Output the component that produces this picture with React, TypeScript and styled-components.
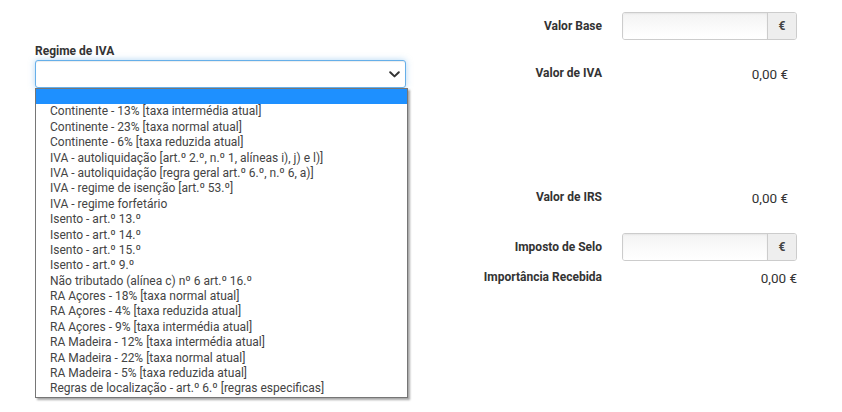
import { createGlobalStyle } from "styled-components";
import styled from "styled-components";

const GlobalStyle = createGlobalStyle`
  html, body {
    margin: 0;
    padding: 0;
    background: #ffffff;
    font-family: Roboto, "Liberation Sans", Arial, sans-serif;
    color: #333333;
  }
`;

const Page = styled.main`
  display: flex;
  width: 842px;
  height: 412px;
  overflow: hidden;
`;

const LeftColumn = styled.section`
  position: relative;
  width: 372px;
  margin-left: 35px;
  padding-top: 43px;
`;

const FieldLabel = styled.label`
  display: block;
  font-size: 12px;
  font-weight: 700;
  line-height: 16px;
  margin-bottom: 1px;
  color: #333;
`;

const SelectBox = styled.div`
  box-sizing: border-box;
  height: 28px;
  width: 371px;
  border: 1px solid #66afe9;
  border-radius: 3px;
  background: #fff;
  box-shadow: inset 0 1px 1px rgba(0, 0, 0, 0.075),
    0 0 6px rgba(102, 175, 233, 0.5);
  display: flex;
  align-items: center;
  justify-content: flex-end;
  padding-right: 5px;
`;

const OptionList = styled.ul`
  position: absolute;
  top: 88px;
  left: 0;
  box-sizing: border-box;
  width: 373px;
  margin: 0;
  padding: 0;
  list-style: none;
  background: #fff;
  border: 1px solid #767676;
  box-shadow: 2px 2px 2px rgba(0, 0, 0, 0.35);
  z-index: 2;
`;

const OptionItem = styled.li<{ $active?: boolean }>`
  height: 15.4px;
  line-height: 15.4px;
  padding-left: 14px;
  font-size: 12px;
  white-space: nowrap;
  color: ${(p) => (p.$active ? "#fff" : "#444")};
  background: ${(p) => (p.$active ? "#1e90ff" : "transparent")};
`;

const RightColumn = styled.section`
  display: flex;
  flex-direction: column;
  margin-left: 15px;
  padding-top: 12px;
`;

const Row = styled.div<{ $gap: number; $align?: string }>`
  display: grid;
  grid-template-columns: 180px 175px;
  column-gap: 20px;
  align-items: ${(p) => p.$align || "center"};
  margin-top: ${(p) => p.$gap}px;
`;

const RowLabel = styled.div`
  text-align: right;
  font-size: 12px;
  font-weight: 700;
  line-height: 16px;
  color: #333;
`;

const Value = styled.div<{ $inset?: number }>`
  text-align: right;
  font-size: 13.5px;
  line-height: 16px;
  color: #333;
  padding-right: ${(p) => p.$inset ?? 0}px;
  margin-top: 1px;
`;

const InputGroup = styled.div`
  display: flex;
  box-sizing: border-box;
  height: 28px;
  border: 1px solid #ccc;
  border-radius: 3px;
  overflow: hidden;
`;

const MoneyInput = styled.div`
  flex: 1;
  background: linear-gradient(#f3f3f3, #fbfbfb 60%, #ffffff);
  box-shadow: inset 0 1px 2px rgba(0, 0, 0, 0.06);
`;

const Addon = styled.span`
  width: 28px;
  border-left: 1px solid #ccc;
  background: #eee;
  display: flex;
  align-items: center;
  justify-content: center;
  font-size: 12px;
  font-weight: 700;
  color: #444;
`;

const options = [
  "",
  "Continente - 13% [taxa intermédia atual]",
  "Continente - 23% [taxa normal atual]",
  "Continente - 6% [taxa reduzida atual]",
  "IVA - autoliquidação [art.º 2.º, n.º 1, alíneas i), j) e l)]",
  "IVA - autoliquidação [regra geral art.º 6.º, n.º 6, a)]",
  "IVA - regime de isenção [art.º 53.º]",
  "IVA - regime forfetário",
  "Isento - art.º 13.º",
  "Isento - art.º 14.º",
  "Isento - art.º 15.º",
  "Isento - art.º 9.º",
  "Não tributado (alínea c) nº 6 art.º 16.º",
  "RA Açores - 18% [taxa normal atual]",
  "RA Açores - 4% [taxa reduzida atual]",
  "RA Açores - 9% [taxa intermédia atual]",
  "RA Madeira - 12% [taxa intermédia atual]",
  "RA Madeira - 22% [taxa normal atual]",
  "RA Madeira - 5% [taxa reduzida atual]",
  "Regras de localização - art.º 6.º [regras especificas]",
];

const Chevron = () => (
  <svg width="11" height="7" viewBox="0 0 11 7">
    <path
      d="M1.2 1.2 L5.5 5.4 L9.8 1.2"
      fill="none"
      stroke="#333"
      strokeWidth="2"
      strokeLinecap="round"
      strokeLinejoin="round"
    />
  </svg>
);

export default function App() {
  return (
    <Page>
      <GlobalStyle />
      <LeftColumn>
        <FieldLabel>Regime de IVA</FieldLabel>
        <SelectBox>
          <Chevron />
        </SelectBox>
        <OptionList>
          {options.map((o, i) => (
            <OptionItem key={i} $active={i === 0}>
              {o}
            </OptionItem>
          ))}
        </OptionList>
      </LeftColumn>

      <RightColumn>
        <Row $gap={0}>
          <RowLabel>Valor Base</RowLabel>
          <InputGroup>
            <MoneyInput />
            <Addon>€</Addon>
          </InputGroup>
        </Row>
        <Row $gap={25} $align="start">
          <RowLabel>Valor de IVA</RowLabel>
          <Value $inset={9}>0,00 €</Value>
        </Row>
        <Row $gap={107} $align="start">
          <RowLabel>Valor de IRS</RowLabel>
          <Value $inset={9}>0,00 €</Value>
        </Row>
        <Row $gap={27}>
          <RowLabel>Imposto de Selo</RowLabel>
          <InputGroup>
            <MoneyInput />
            <Addon>€</Addon>
          </InputGroup>
        </Row>
        <Row $gap={8} $align="start">
          <RowLabel>Importância Recebida</RowLabel>
          <Value>0,00 €</Value>
        </Row>
      </RightColumn>
    </Page>
  );
}
